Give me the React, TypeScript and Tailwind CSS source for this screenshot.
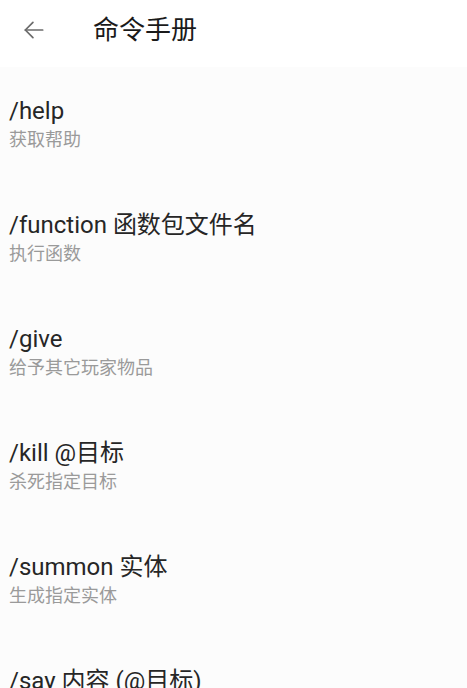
const COMMANDS = [
  { cmd: "/help", desc: "获取帮助" },
  { cmd: "/function 函数包文件名", desc: "执行函数" },
  { cmd: "/give", desc: "给予其它玩家物品" },
  { cmd: "/kill @目标", desc: "杀死指定目标" },
  { cmd: "/summon 实体", desc: "生成指定实体" },
  { cmd: "/say 内容 (@目标)", desc: "向玩家发送消息" },
  { cmd: "/tp @目标 坐标", desc: "传送到指定位置" },
];

export default function App() {
  return (
    <div
      className="h-[688px] w-[467px] overflow-hidden bg-[#fcfcfc]"
      style={{ fontFamily: 'Roboto, "Noto Sans CJK SC", sans-serif' }}
    >
      {/* header */}
      <div className="flex h-[67px] items-center bg-white pb-[7px]">
        <div className="flex w-[93px] items-center pl-[21px]">
          <svg viewBox="0 0 24 24" className="h-[26px] w-[26px]" fill="none" stroke="#6b6b6b" strokeWidth="1.6" strokeLinecap="round" strokeLinejoin="round">
            <path d="M20 12H4" />
            <path d="M11 5l-7 7 7 7" />
          </svg>
        </div>
        <h1 className="text-[26px] leading-none font-normal text-[#1a1a1a]">命令手册</h1>
      </div>

      {/* list */}
      <div className="flex flex-col">
        {COMMANDS.map((c) => (
          <div key={c.cmd} className="px-[9px] py-[28px]">
            <p className="text-[24px] leading-[32px] text-[#262626]">{c.cmd}</p>
            <p className="text-[18px] leading-[26px] text-[#9a9a9a]">{c.desc}</p>
          </div>
        ))}
      </div>
    </div>
  );
}
